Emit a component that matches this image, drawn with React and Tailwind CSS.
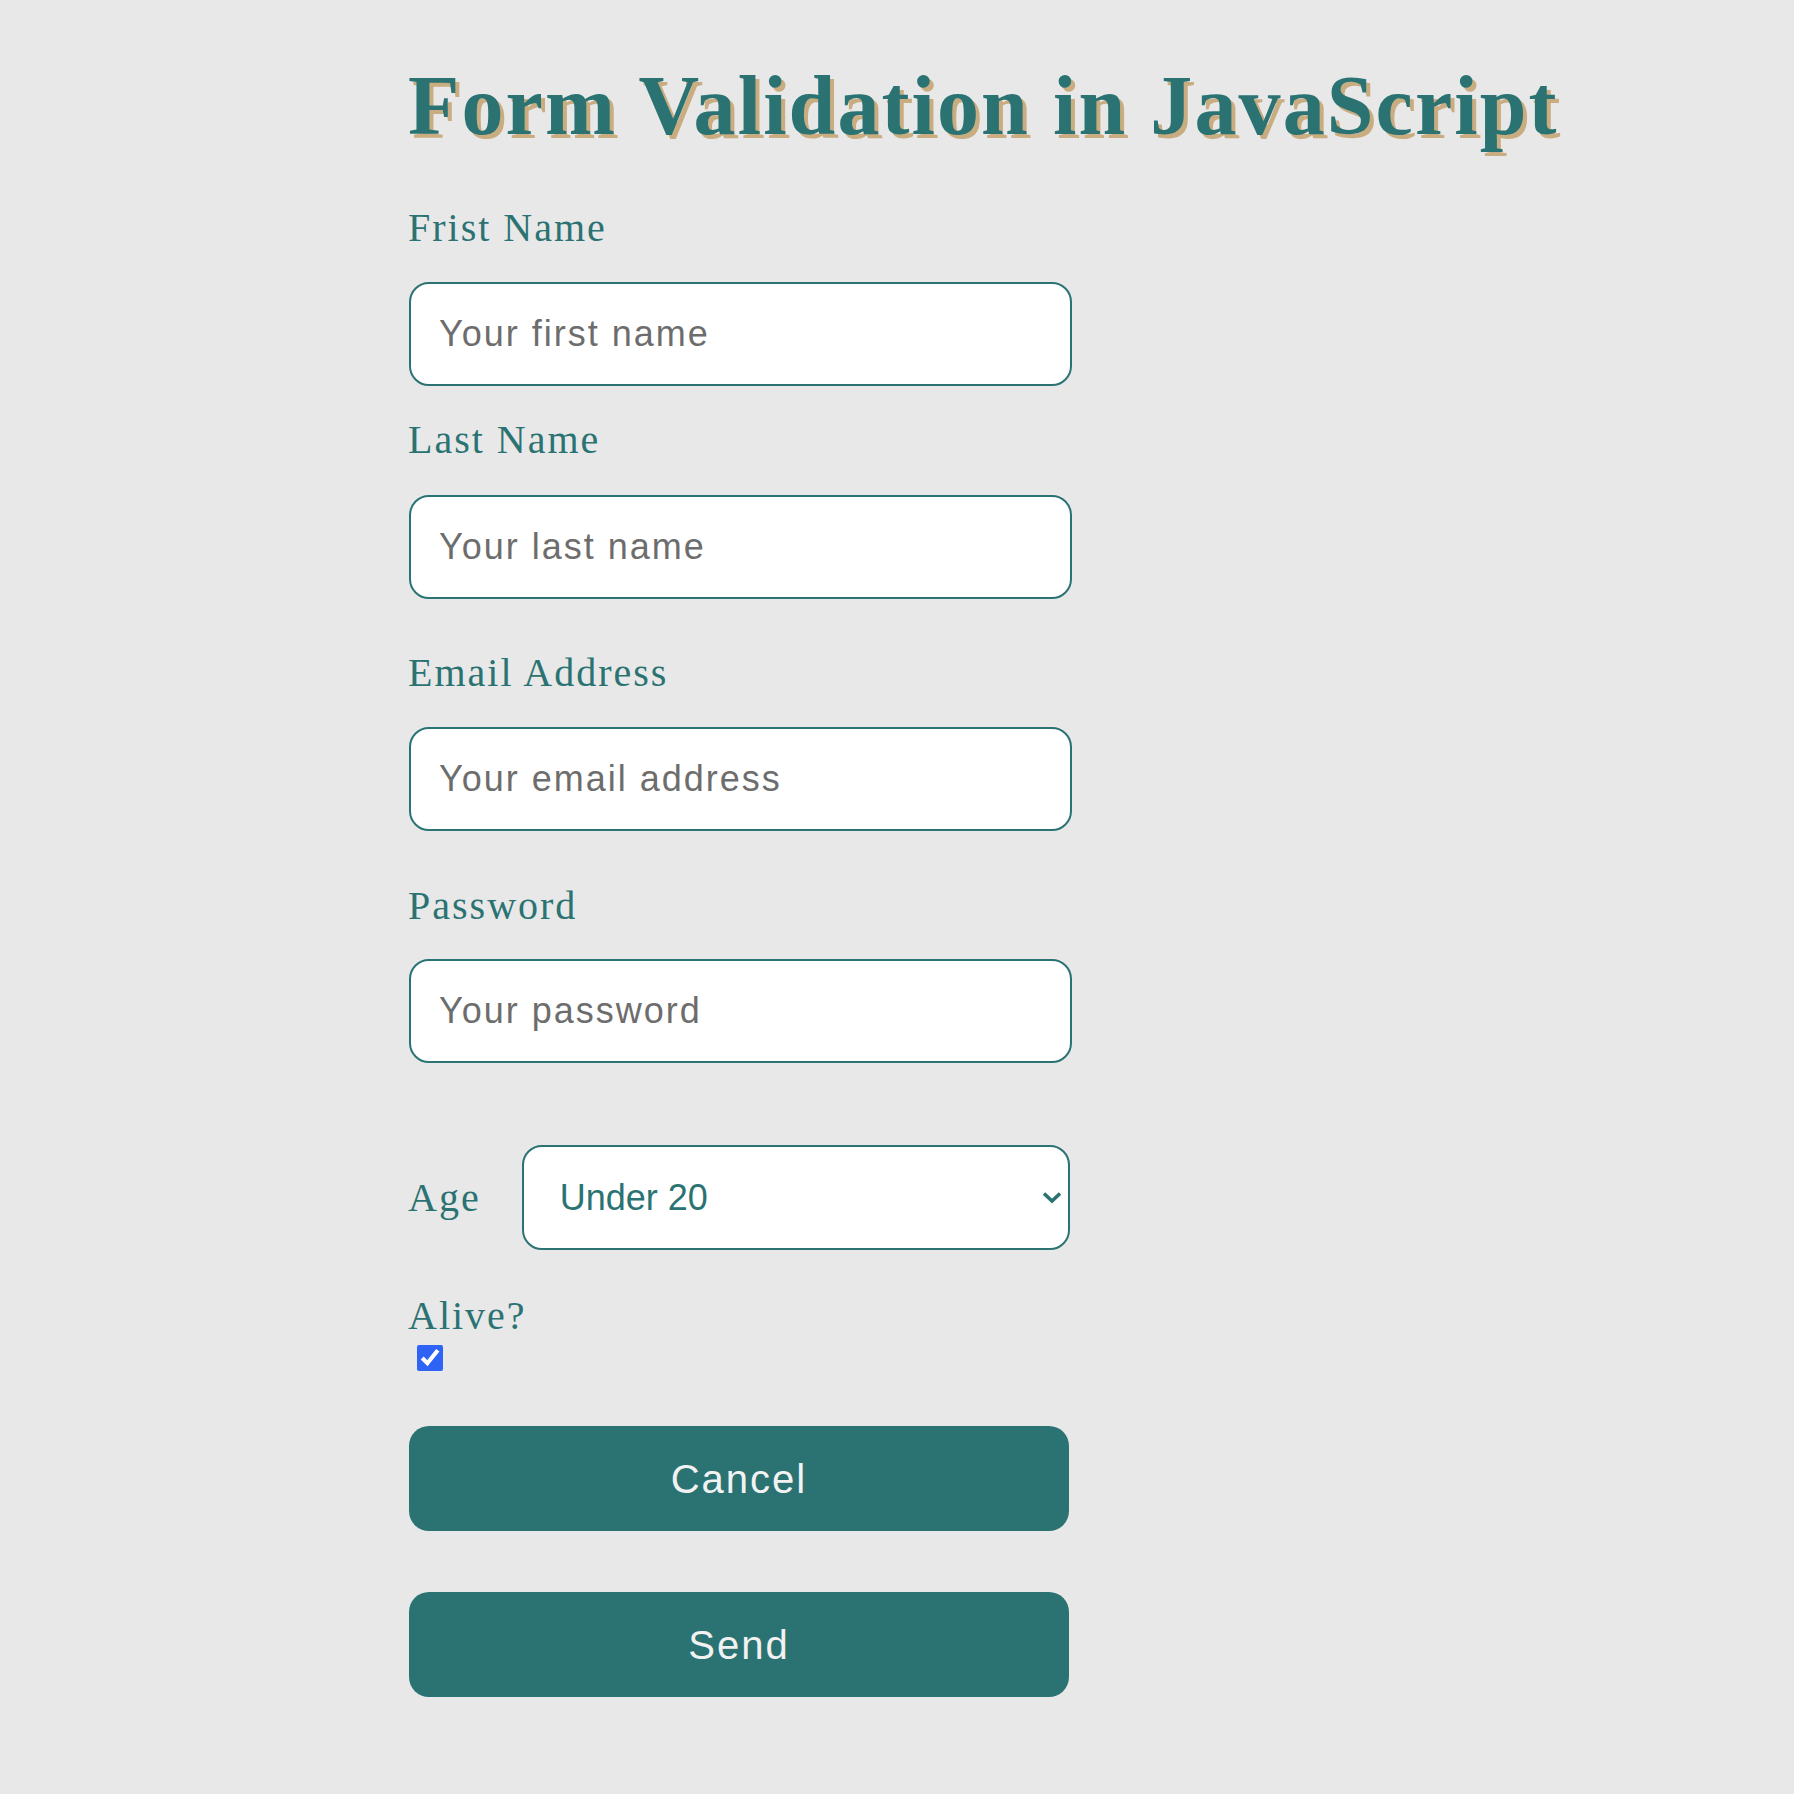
import React from "react";

const serif = "font-['Liberation_Serif','Times_New_Roman',serif]";

function Label({ children, className = "" }) {
  return (
    <label
      className={`block text-[40px] leading-[40px] tracking-[2px] text-[#2b7373] ${serif} ${className}`}
    >
      {children}
    </label>
  );
}

function TextInput({ placeholder, type = "text", className = "" }) {
  return (
    <input
      type={type}
      placeholder={placeholder}
      className={`block ml-[1px] w-[663px] h-[104px] rounded-[20px] border-2 border-[#2b7373] bg-white pl-[28px] pr-[20px] text-[36px] tracking-[2px] text-[#333] placeholder:text-[#6d6d6d] outline-none font-['Liberation_Sans',Arial,sans-serif] ${className}`}
    />
  );
}

export default function App() {
  return (
    <div className="min-h-screen bg-[#e8e8e8] pt-[64px] pl-[408px] pb-[80px]">
      <h1
        className={`text-[84px] leading-[84px] font-bold tracking-[2.1px] text-[#2b7373] [text-shadow:4px_4px_0_#c9ad80] ${serif}`}
      >
        Form Validation in JavaScript
      </h1>

      <form className="mt-[60px]" onSubmit={(e) => e.preventDefault()}>
        <Label>Frist Name</Label>
        <TextInput placeholder="Your first name" className="mt-[34px]" />

        <Label className="mt-[34px]">Last Name</Label>
        <TextInput placeholder="Your last name" className="mt-[35px]" />

        <Label className="mt-[54px]">Email Address</Label>
        <TextInput placeholder="Your email address" type="email" className="mt-[34px]" />

        <Label className="mt-[55px]">Password</Label>
        <TextInput placeholder="Your password" type="password" className="mt-[33px]" />

        <div className="mt-[82px] flex items-center gap-[41px]">
          <Label>Age</Label>
          <div className="relative">
            <select
              defaultValue="under20"
              className="block w-[548px] h-[105px] appearance-none rounded-[20px] border-2 border-[#2b7373] bg-white pl-[36px] pr-[40px] text-[36px] text-[#2b7373] outline-none font-['Liberation_Sans',Arial,sans-serif]"
            >
              <option value="under20">Under 20</option>
              <option value="20to40">20 - 40</option>
              <option value="over40">Over 40</option>
            </select>
            <svg
              className="pointer-events-none absolute right-[8px] top-[46px]"
              width="20"
              height="13"
              viewBox="0 0 20 13"
              fill="none"
            >
              <path
                d="M2 2.5 L10 10 L18 2.5"
                stroke="#2b7373"
                strokeWidth="3.6"
                strokeLinecap="butt"
                strokeLinejoin="miter"
              />
            </svg>
          </div>
        </div>

        <Label className="mt-[46px]">Alive?</Label>
        <input
          type="checkbox"
          defaultChecked
          className="block mt-[9px] ml-[9px] w-[26px] h-[26px] accent-[#2f63f5]"
        />

        <button
          type="button"
          className="mt-[55px] ml-[1px] block w-[660px] h-[105px] rounded-[20px] bg-[#2b7373] text-[40px] tracking-[2px] text-[#f2f2f2] font-['Liberation_Sans',Arial,sans-serif]"
        >
          Cancel
        </button>
        <button
          type="submit"
          className="mt-[61px] ml-[1px] block w-[660px] h-[105px] rounded-[20px] bg-[#2b7373] text-[40px] tracking-[2px] text-[#f2f2f2] font-['Liberation_Sans',Arial,sans-serif]"
        >
          Send
        </button>
      </form>
    </div>
  );
}
